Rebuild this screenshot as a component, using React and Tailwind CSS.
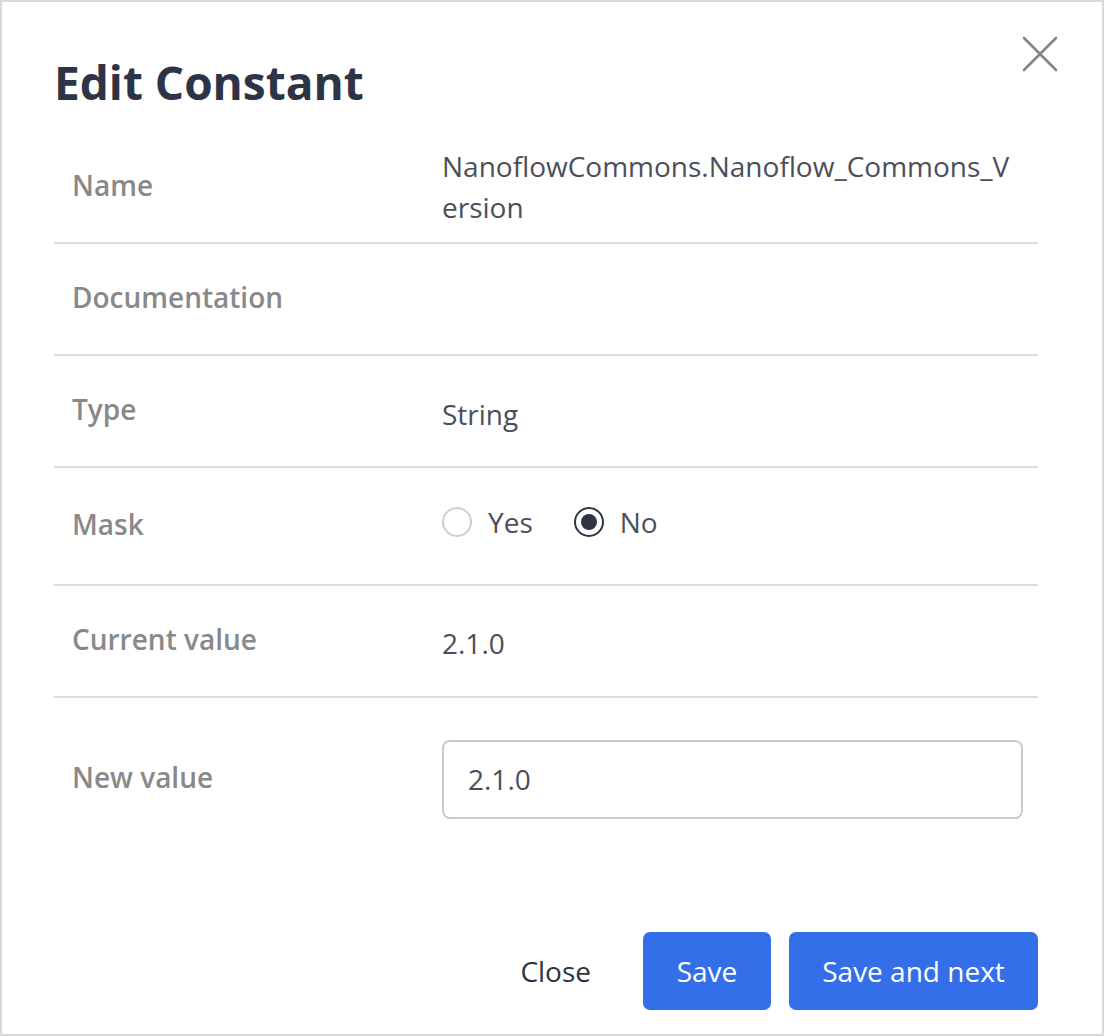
import React from 'react';

const font = { fontFamily: '"Open Sans", "Noto Sans", sans-serif' };

const Row = ({ label, children, className = 'h-[112px]', last = false }) => (
  <div className={`grid grid-cols-[388px_1fr] items-center ${last ? '' : 'border-b-2 border-[#dcdcdc]'} ${className}`}>
    <div className="pl-[18px] pb-[5px] text-[28px] font-semibold text-[#898989]">{label}</div>
    <div className="text-[28px] leading-[41px] text-[#4b4f5a]">{children}</div>
  </div>
);

const Radio = ({ checked, label }) => (
  <label className="flex items-center gap-[16px]">
    <span
      className={`flex h-[30px] w-[30px] items-center justify-center rounded-full border-2 ${
        checked ? 'border-[#2d3446]' : 'border-[#cfcfcf]'
      }`}
    >
      {checked && <span className="h-[16px] w-[16px] rounded-full bg-[#2d3446]"></span>}
    </span>
    <span>{label}</span>
  </label>
);

export default function App() {
  return (
    <div style={font} className="relative h-[1036px] w-[1104px] border-2 border-[#d9d9d9] bg-white">
      <button className="absolute right-[44px] top-[34px] text-[#80848c]" aria-label="Close">
        <svg width="36" height="36" viewBox="0 0 36 36" fill="none" stroke="currentColor" strokeWidth="2.6" strokeLinecap="round">
          <path d="M2 2L34 34M34 2L2 34" />
        </svg>
      </button>

      <div className="pl-[52px] pr-[64px] pt-[53px]">
        <h1 className="text-[46px] font-bold leading-[1.2] text-[#2d3446]">Edit Constant</h1>

        <div className="mt-[22px]">
          <Row label="Name">
            <div className="break-all pr-[20px]">NanoflowCommons.Nanoflow_Commons_Version</div>
          </Row>
          <Row label="Documentation"><div></div></Row>
          <Row label="Type">
            <div className="pt-[6px]">String</div>
          </Row>
          <Row label="Mask" className="h-[118px]">
            <div className="flex items-center gap-[41px] pb-[8px]">
              <Radio label="Yes" />
              <Radio checked label="No" />
            </div>
          </Row>
          <Row label="Current value">
            <div className="pt-[4px]">2.1.0</div>
          </Row>
          <Row label="New value" className="h-[162px]" last>
            <div className="flex h-[79px] w-[581px] items-center rounded-[8px] border-2 border-[#c9cacd] pl-[24px]">
              2.1.0
            </div>
          </Row>
        </div>

        <div className="mt-[72px] flex items-center justify-end">
          <button className="mr-[52px] text-[28px] text-[#2d3446]">Close</button>
          <button className="h-[78px] w-[128px] rounded-[7px] bg-[#346fe9] text-[28px] text-white">Save</button>
          <button className="ml-[18px] h-[78px] w-[249px] rounded-[7px] bg-[#346fe9] text-[28px] text-white">
            Save and next
          </button>
        </div>
      </div>
    </div>
  );
}
